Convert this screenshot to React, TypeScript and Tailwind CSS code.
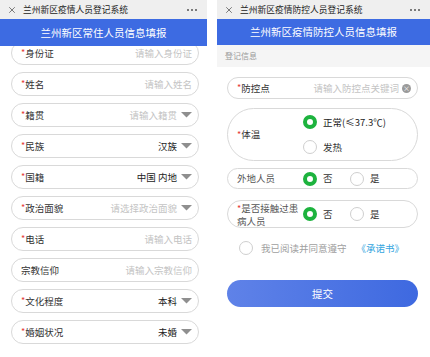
import { X } from 'lucide-react';

const font = { fontFamily: '"Noto Sans CJK SC", "Noto Sans", sans-serif' };

interface Field {
  label: string;
  required?: boolean;
  value?: string;
  placeholder?: string;
  select?: boolean;
}

const fields: Field[] = [
  { label: '身份证', required: true, placeholder: '请输入身份证' },
  { label: '姓名', required: true, placeholder: '请输入姓名' },
  { label: '籍贯', required: true, placeholder: '请输入籍贯', select: true },
  { label: '民族', required: true, value: '汉族', select: true },
  { label: '国籍', required: true, value: '中国 内地', select: true },
  { label: '政治面貌', required: true, placeholder: '请选择政治面貌', select: true },
  { label: '电话', required: true, placeholder: '请输入电话' },
  { label: '宗教信仰', placeholder: '请输入宗教信仰' },
  { label: '文化程度', required: true, value: '本科', select: true },
  { label: '婚姻状况', required: true, value: '未婚', select: true },
];

function TopBar({ title }: { title: string }) {
  return (
    <div className="h-[19px] bg-[#efefef] flex items-center pl-[7px] pr-[10px] text-[8.75px] text-[#222]">
      <X size={10} strokeWidth={1.5} className="text-[#333]" />
      <span className="ml-[6px] flex-1">{title}</span>
      <span className="flex gap-[2px]">
        <span className="w-[2px] h-[2px] rounded-full bg-[#555]" />
        <span className="w-[2px] h-[2px] rounded-full bg-[#555]" />
        <span className="w-[2px] h-[2px] rounded-full bg-[#555]" />
      </span>
    </div>
  );
}

function Caret() {
  return (
    <svg width="11" height="6" viewBox="0 0 11 6" className="ml-[4px]">
      <path d="M0 0 L11 0 L5.5 5.5 Z" fill="#8f8f8f" />
    </svg>
  );
}

function Star() {
  return <span className="text-[#e53935] text-[9px]">*</span>;
}

function Radio({ checked }: { checked?: boolean }) {
  return checked ? (
    <span className="w-[14px] h-[14px] shrink-0 rounded-full border-[4px] border-[#1db33e] bg-white inline-block" />
  ) : (
    <span className="w-[14px] h-[14px] shrink-0 rounded-full border border-[#cfcfcf] bg-white inline-block" />
  );
}

function LeftPanel() {
  return (
    <div className="w-[207px] h-full flex flex-col overflow-hidden bg-white">
      <TopBar title="兰州新区疫情人员登记系统" />
      <div className="relative z-10 h-[27px] bg-[#3d6be2] text-white text-[10.5px] flex items-center justify-center">
        兰州新区常住人员信息填报
      </div>
      <div className="-mt-[5px] flex flex-col gap-[7px] pl-[11px] pr-[8px]">
        {fields.map((f) => (
          <div
            key={f.label}
            className="h-[24px] rounded-full border border-[#d9d9d9] flex items-center pl-[9px] pr-[6px] text-[9.5px]"
          >
            <span className="text-[#333] flex items-center">
              {f.required && <Star />}
              {f.label}
            </span>
            <span className="flex-1" />
            {f.value ? (
              <span className="text-[#222]">{f.value}</span>
            ) : (
              <span className="text-[#c4c4c4]">{f.placeholder}</span>
            )}
            {f.select && <Caret />}
          </div>
        ))}
      </div>
    </div>
  );
}

function RightPanel() {
  return (
    <div className="w-[213px] h-full flex flex-col overflow-hidden bg-white">
      <TopBar title="兰州新区疫情防控人员登记系统" />
      <div className="h-[26px] bg-[#3d6be2] text-white text-[10.5px] flex items-center justify-center">
        兰州新区疫情防控人员信息填报
      </div>
      <div className="h-[22px] bg-[#f5f5f5] text-[#9a9a9a] text-[8px] flex items-center pl-[8px]">登记信息</div>
      <div className="flex flex-col pl-[10px] pr-[12px] text-[9.5px] text-[#333]">
        <div className="mt-[10px] h-[22px] rounded-full border border-[#d9d9d9] flex items-center pl-[9px] pr-[6px]">
          <span className="flex items-center">
            <Star />
            防控点
          </span>
          <span className="flex-1" />
          <span className="text-[#c4c4c4]">请输入防控点关键词</span>
          <span className="ml-[3px] w-[9px] h-[9px] rounded-full bg-[#9a9a9a] text-white text-[7px] leading-none flex items-center justify-center">
            ×
          </span>
        </div>

        <div className="mt-[9px] h-[53px] rounded-full border border-[#d9d9d9] flex items-center pl-[9px]">
          <span className="w-[66px] flex items-center">
            <Star />
            体温
          </span>
          <div className="flex flex-col gap-[10px]">
            <div className="flex items-center gap-[6px]">
              <Radio checked />
              <span className="text-[#222]">正常(≤37.3℃)</span>
            </div>
            <div className="flex items-center gap-[6px]">
              <Radio />
              <span>发热</span>
            </div>
          </div>
        </div>

        <div className="mt-[7px] h-[21px] rounded-full border border-[#d9d9d9] flex items-center pl-[9px]">
          <span className="w-[66px] text-[#555]">外地人员</span>
          <div className="flex items-center gap-[6px] w-[47px]">
            <Radio checked />
            <span>否</span>
          </div>
          <div className="flex items-center gap-[6px]">
            <Radio />
            <span>是</span>
          </div>
        </div>

        <div className="mt-[11px] h-[28px] rounded-full border border-[#d9d9d9] flex items-center pl-[9px]">
          <span className="w-[66px] leading-[12px] text-[#555]">
            <Star />
            是否接触过患
            <br />
            病人员
          </span>
          <div className="flex items-center gap-[6px] w-[47px]">
            <Radio checked />
            <span>否</span>
          </div>
          <div className="flex items-center gap-[6px]">
            <Radio />
            <span>是</span>
          </div>
        </div>

        <div className="mt-[13px] flex items-center pl-[12px] text-[9.5px]">
          <span className="w-[14px] h-[14px] rounded-full border border-[#cfcfcf]" />
          <span className="ml-[8px] text-[#a0a0a0]">我已阅读并同意遵守</span>
          <span className="ml-[10px] text-[#35a6e0]">《承诺书》</span>
        </div>

        <div className="mt-[25px] h-[27px] rounded-full bg-gradient-to-r from-[#5f82e8] to-[#3e69e0] text-white flex items-center justify-center text-[10.5px]">
          提交
        </div>
      </div>
    </div>
  );
}

export default function App() {
  return (
    <div className="w-[430px] h-[357px] flex bg-white overflow-hidden" style={font}>
      <LeftPanel />
      <div className="w-[10px]" />
      <RightPanel />
    </div>
  );
}
